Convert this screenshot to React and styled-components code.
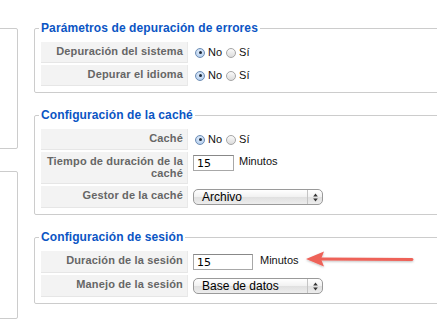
import React from 'react'
import styled, { createGlobalStyle } from 'styled-components'

const Global = createGlobalStyle`
  html, body { margin: 0; padding: 0; background: #fff; overflow: hidden; }
  body { font-family: "Liberation Sans", Arial, sans-serif; }
`

const debugRows = [
  { label: 'Depuración del sistema', type: 'radio' },
  { label: 'Depurar el idioma', type: 'radio' },
]

const cacheRows = [
  { label: 'Caché', type: 'radio' },
  { label: 'Tiempo de duración de la caché', type: 'input', value: '15', width: 41, gap: 5 },
  { label: 'Gestor de la caché', type: 'select', value: 'Archivo' },
]

const sessionRows = [
  { label: 'Duración de la sesión', type: 'input', value: '15', width: 60, gap: 7 },
  { label: 'Manejo de la sesión', type: 'select', value: 'Base de datos' },
]

const Radio = ({ checked, label }) => (
  <RadioWrap>
    <RadioDot checked={checked} />
    <span>{label}</span>
  </RadioWrap>
)

const Field = ({ row }) => {
  if (row.type === 'radio') {
    return (<Value>
      <Radio checked label="No" />
      <Radio label="Sí" />
    </Value>)
  }
  if (row.type === 'input') {
    return (<Value top>
      <TextInput readOnly value={row.value} $width={row.width} />
      <Unit $gap={row.gap}>Minutos</Unit>
    </Value>)
  }
  return (<Value>
    <Select>
      <span>{row.value}</span>
      <Arrows>
        <svg width="5" height="9" viewBox="0 0 5 9">
          <path d="M2.5 0.5 L4.8 3.5 L0.2 3.5 Z" fill="#333" />
          <path d="M2.5 8.5 L4.8 5.5 L0.2 5.5 Z" fill="#333" />
        </svg>
      </Arrows>
    </Select>
  </Value>)
}

const Group = ({ title, rows }) => (
  <Fieldset>
    <Legend>{title}</Legend>
    <Rows>
      {rows.map(r => (
        <Row key={r.label}>
          <Key>{r.label}</Key>
          <Field row={r} />
        </Row>
      ))}
    </Rows>
  </Fieldset>
)

export default function App() {
  return (<Page>
    <Global />
    <LeftCol>
      <SideBox $height={121} />
      <SideBox $height={148} />
    </LeftCol>
    <Main>
      <Group title="Parámetros de depuración de errores" rows={debugRows} />
      <Group title="Configuración de la caché" rows={cacheRows} />
      <Group title="Configuración de sesión" rows={sessionRows} />
    </Main>
    <Pointer width="118" height="22" viewBox="0 0 118 22">
      <defs>
        <filter id="sh" x="-10%" y="-40%" width="120%" height="180%">
          <feDropShadow dx="0" dy="1" stdDeviation="0.8" floodColor="#000" floodOpacity="0.25" />
        </filter>
      </defs>
      <g filter="url(#sh)">
        <line x1="16" y1="11" x2="108" y2="11.5" stroke="#ee6259" strokeWidth="3" strokeLinecap="round" />
        <path d="M2 11 L20 3.5 L17 11 L20 18.5 Z" fill="#ee6259" />
      </g>
    </Pointer>
  </Page>)
}

const Page = styled.div`
  position: relative;
  display: flex;
  align-items: flex-start;
  width: 437px;
  height: 324px;
  overflow: hidden;
`
const LeftCol = styled.div`
  flex: none;
  display: flex;
  flex-direction: column;
  gap: 22px;
  width: 100px;
  margin-left: -82px;
  margin-top: 28px;
`
const SideBox = styled.div`
  box-sizing: border-box;
  height: ${p => p.$height}px;
  border: 1px solid #ccc;
  border-radius: 2px;
`
const Main = styled.div`
  flex: none;
  width: 520px;
  margin-left: 16px;
  padding-top: 20px;
  display: flex;
  flex-direction: column;
  gap: 14px;
`
const Fieldset = styled.fieldset`
  margin: 0;
  padding: 6px 6px 6px 6px;
  border: 1px solid #ccc;
  border-radius: 2px;
`
const Legend = styled.legend`
  padding: 0 2px;
  margin-left: -2px;
  font-size: 12px;
  letter-spacing: 0.1px;
  line-height: 16px;
  font-weight: bold;
  color: #0b55c4;
`
const Rows = styled.div`
  display: flex;
  flex-direction: column;
  gap: 2px;
`
const Row = styled.div`
  display: grid;
  grid-template-columns: 147px 1fr;
  column-gap: 2px;
`
const Key = styled.div`
  box-sizing: border-box;
  background: #f3f3f3;
  border-bottom: 1px solid #e6e6e6;
  border-right: 1px solid #e9e9e9;
  padding: 3px 4px 4px 4px;
  font-size: 11px;
  letter-spacing: 0.15px;
  line-height: 12px;
  font-weight: bold;
  color: #666;
  text-align: right;
`
const Value = styled.div`
  display: flex;
  align-items: ${p => (p.top ? 'flex-start' : 'center')};
  padding: 3px 3px;
  min-height: 15px;
  font-size: 11px;
  color: #111;
`
const RadioWrap = styled.label`
  display: flex;
  align-items: center;
  gap: 3px;
  margin-left: 2px;
  margin-right: 2px;
  line-height: 15px;
`
const RadioDot = styled.span`
  box-sizing: border-box;
  position: relative;
  width: 10px;
  height: 10px;
  border-radius: 50%;
  border: 1px solid ${p => (p.checked ? '#6d8db5' : '#a5a5a5')};
  background: ${p => (p.checked
    ? 'radial-gradient(circle at 50% 35%, #e3eefb, #a9c6ea)'
    : 'linear-gradient(#fafafa, #dcdcdc)')};
  &::after {
    content: '';
    display: ${p => (p.checked ? 'block' : 'none')};
    position: absolute;
    left: 2.5px;
    top: 2.5px;
    width: 3px;
    height: 3px;
    border-radius: 50%;
    background: #1c2a3c;
  }
`
const TextInput = styled.input`
  box-sizing: border-box;
  width: ${p => p.$width}px;
  height: 16px;
  margin: 0;
  padding: 0 3px;
  border: 1px solid #a8a8a8;
  border-top-color: #888;
  font-family: "DejaVu Sans", sans-serif;
  font-size: 11px;
  color: #000;
  outline: none;
`
const Unit = styled.span`
  margin-left: ${p => p.$gap}px;
  font-size: 11px;
  line-height: 12px;
  color: #111;
`
const Select = styled.div`
  box-sizing: border-box;
  position: relative;
  display: flex;
  align-items: center;
  width: 130px;
  height: 16px;
  padding-left: 8px;
  border: 1px solid #9a9a9a;
  border-radius: 5px;
  background: linear-gradient(#ffffff, #f1f1f1 50%, #e0e0e0 51%, #ededed);
  font-size: 12px;
  color: #000;
`
const Arrows = styled.span`
  position: absolute;
  right: 0;
  top: 0;
  bottom: 0;
  width: 14px;
  display: flex;
  align-items: center;
  justify-content: center;
  border-left: 1px solid #c4c4c4;
`
const Pointer = styled.svg`
  position: absolute;
  left: 304px;
  top: 248px;
`
